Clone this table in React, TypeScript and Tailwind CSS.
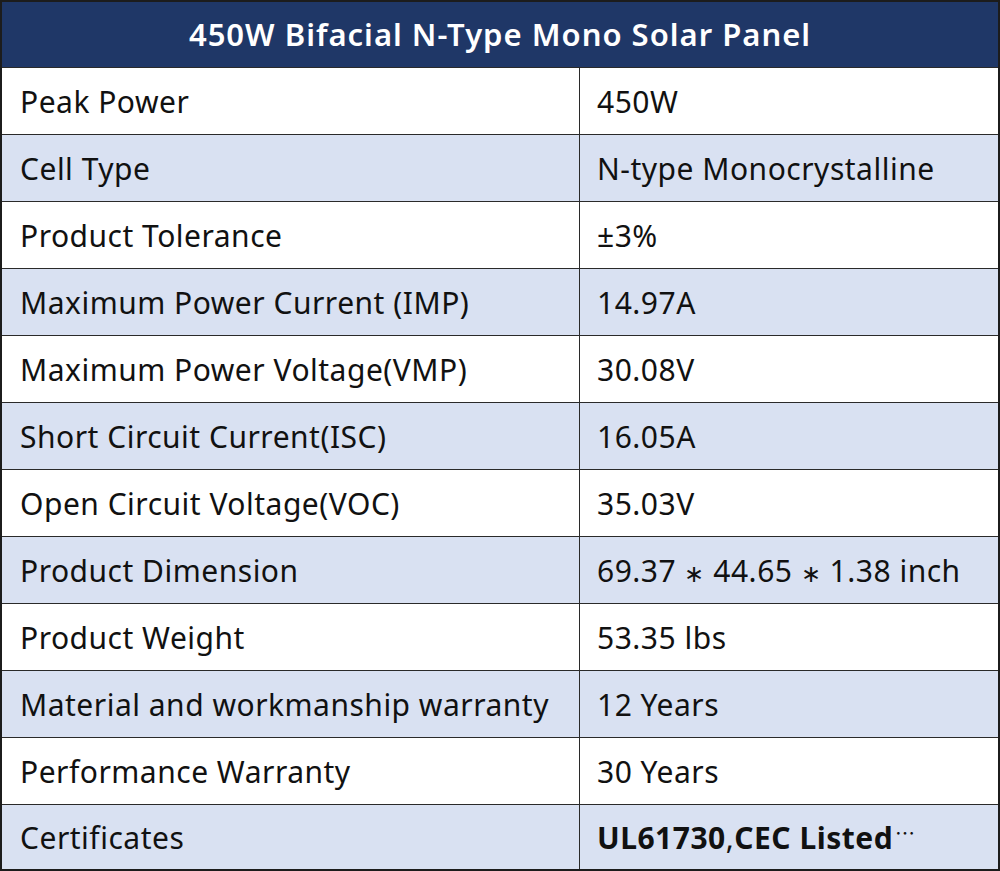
import React from 'react';

const ROWS: [string, string][] = [
  ['Peak Power', '450W'],
  ['Cell Type', 'N-type Monocrystalline'],
  ['Product Tolerance', '±3%'],
  ['Maximum Power Current (IMP)', '14.97A'],
  ['Maximum Power Voltage(VMP)', '30.08V'],
  ['Short Circuit Current(ISC)', '16.05A'],
  ['Open Circuit Voltage(VOC)', '35.03V'],
  ['Product Dimension', '69.37 ∗ 44.65 ∗ 1.38 inch'],
  ['Product Weight', '53.35 lbs'],
  ['Material and workmanship warranty', '12 Years'],
  ['Performance Warranty', '30 Years'],
  ['Certificates', 'UL61730,CEC Listed···'],
];

// the star in the dimension row is smaller than the digits
const renderValue = (value: string) => {
  const parts = value.split('∗');
  if (parts.length === 1) return value;
  return (
    <span>
      {parts.map((p, i) => (
        <React.Fragment key={i}>
          {i > 0 && <span className="text-[24px]">∗</span>}
          {p}
        </React.Fragment>
      ))}
    </span>
  );
};

export default function App() {
  return (
    <div
      className="w-[1000px] h-[871px] bg-white overflow-hidden"
      style={{ fontFamily: '"Noto Sans", "Noto Sans CJK SC", sans-serif' }}
    >
      <div className="border-2 border-[#1c1c1c] flex flex-col">
        <div className="h-[65px] bg-[#1f3767] text-white flex items-center justify-center text-[31px] font-semibold tracking-[1px]">
          450W Bifacial N-Type Mono Solar Panel
        </div>
        {ROWS.map(([label, value], i) => {
          const blue = i % 2 === 1;
          const last = i === ROWS.length - 1;
          return (
            <div
              key={label}
              className={`flex border-t border-[#2a2a2a] text-[#111] text-[30px] tracking-[0.5px] ${blue ? 'bg-[#d9e1f2]' : 'bg-white'} ${last ? 'h-[65px]' : 'h-[67px]'}`}
            >
              <div className="w-[578px] pl-[18px] flex items-center border-r border-[#2a2a2a] whitespace-nowrap">
                {label}
              </div>
              <div className={`flex-1 pl-[17px] flex items-center whitespace-nowrap ${last ? 'font-bold' : ''}`}>
                {last ? (
                  <>
                    UL61730<span className="font-normal">,</span>CEC Listed
                    <span className="font-normal text-[20px] -mt-[6px] ml-[2px]">⋯</span>
                  </>
                ) : (
                  renderValue(value)
                )}
              </div>
            </div>
          );
        })}
      </div>
    </div>
  );
}
